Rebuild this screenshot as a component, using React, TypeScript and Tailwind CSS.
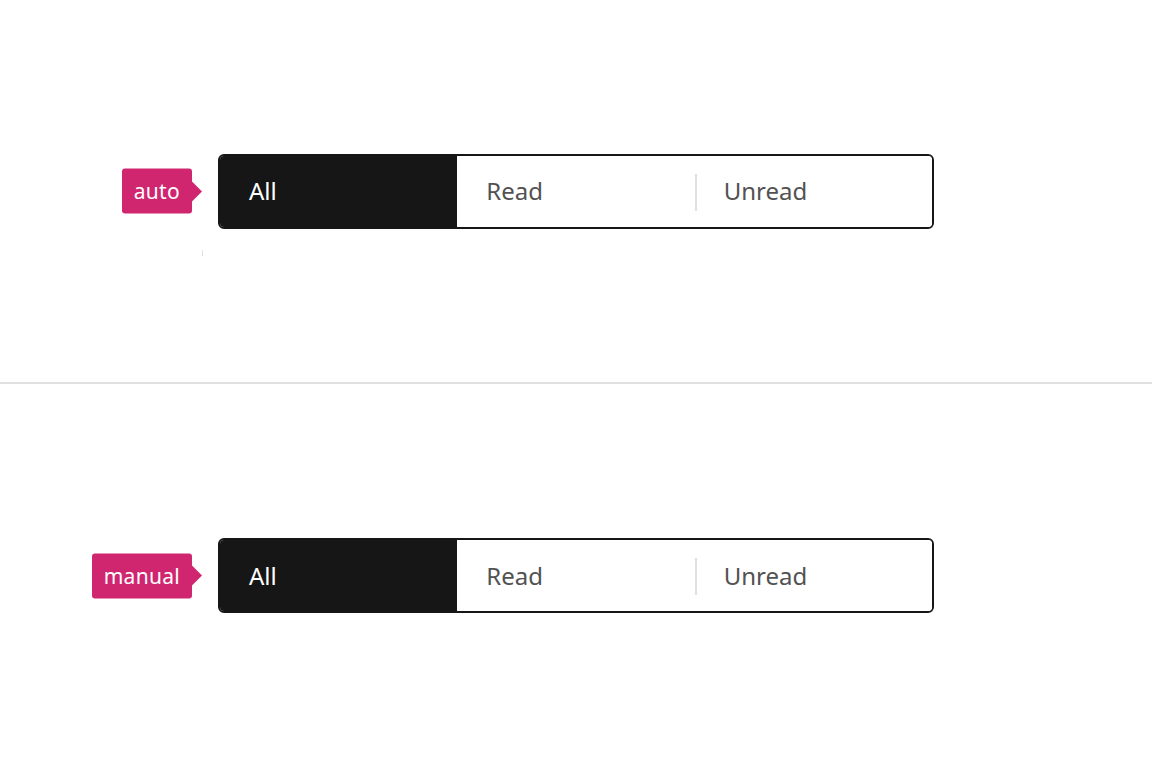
import { useState } from "react";

const tabs = ["All", "Read", "Unread"];

function Label({ text }: { text: string }) {
  return (
    <div className="absolute right-full top-1/2 mr-4 flex -translate-y-1/2 items-center">
      <div className="flex h-[45px] items-center rounded-[3px] bg-[#d02670] px-[12px] text-[21px] leading-none tracking-[0.3px] text-white">
        {text}
      </div>
      <svg width="11" height="22" viewBox="0 0 11 22" className="-ml-px">
        <path d="M0 0 L11 11 L0 22 Z" fill="#d02670" />
      </svg>
    </div>
  );
}

function Switcher({ label }: { label: string }) {
  const [active, setActive] = useState(0);
  return (
    <div className="relative">
      <Label text={label} />
      <div className="flex h-[75px] w-[716px] overflow-hidden rounded-[6px] border-2 border-[#161616] bg-white">
        {tabs.map((t, i) => {
          const selected = i === active;
          const showDivider = i > 0 && !selected && active !== i - 1;
          return (
            <button
              key={t}
              onClick={() => setActive(i)}
              className={
                "relative flex flex-1 items-center px-[29px] text-left text-[24px] " +
                (selected ? "bg-[#161616] text-white" : "bg-white text-[#525252]")
              }
            >
              {showDivider && (
                <span className="absolute left-0 top-[18px] h-[37px] w-[2px] bg-[#e0e0e0]" />
              )}
              {t}
            </button>
          );
        })}
      </div>
    </div>
  );
}

export default function App() {
  return (
    <div
      className="flex h-[767px] w-full flex-col bg-white"
      style={{ fontFamily: '"Noto Sans", "Open Sans", sans-serif' }}
    >
      <section className="relative flex h-[384px] items-center justify-center border-b-2 border-[#e0e0e0]">
        <Switcher label="auto" />
        <span className="absolute left-[202px] top-[250px] h-[6px] w-px bg-[#e0e0e0]" />
      </section>
      <section className="flex flex-1 items-center justify-center">
        <Switcher label="manual" />
      </section>
    </div>
  );
}
